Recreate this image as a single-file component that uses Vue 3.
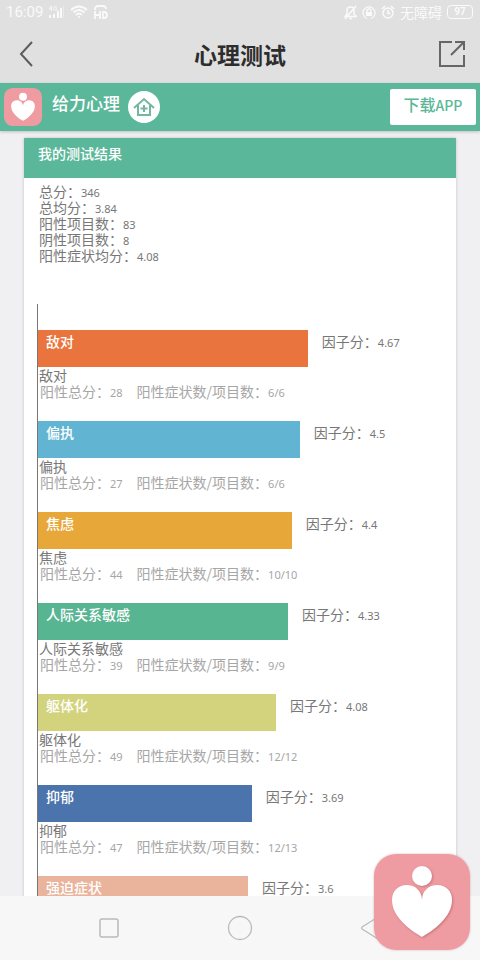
<script setup>
const summary = [
  { label: '总分', value: '346' },
  { label: '总均分', value: '3.84' },
  { label: '阳性项目数', value: '83' },
  { label: '阴性项目数', value: '8' },
  { label: '阳性症状均分', value: '4.08' }
]

const factors = [
  { name: '敌对', score: '4.67', total: '28', ratio: '6/6', width: 66.8, color: 'orange' },
  { name: '偏执', score: '4.5', total: '27', ratio: '6/6', width: 64.8, color: 'sky' },
  { name: '焦虑', score: '4.4', total: '44', ratio: '10/10', width: 62.8, color: 'amber' },
  { name: '人际关系敏感', score: '4.33', total: '39', ratio: '9/9', width: 61.9, color: 'green' },
  { name: '躯体化', score: '4.08', total: '49', ratio: '12/12', width: 58.9, color: 'lime' },
  { name: '抑郁', score: '3.69', total: '47', ratio: '12/13', width: 52.9, color: 'blue' },
  { name: '强迫症状', score: '3.6', width: 52, color: 'peach' }
]
</script>

<template>
  <div class="screen">
    <div class="status">
      <div class="status-group">
        <span class="clock">16:09</span>
        <svg width="17" height="14" viewBox="0 0 17 14" fill="currentColor">
          <path d="M1 10h2v3H1zM5 9h2v4H5zM9 6h2v7H9zM12 3h2v10h-2z" />
          <path d="M15 1h1v12h-1z" opacity=".4" />
          <path d="M3 1L1 4h3M3.500 1v5M9 2H6v3h3V4H8" fill="none" stroke="currentColor" stroke-width=".8" />
        </svg>
        <svg width="18" height="14" viewBox="0 0 18 14" fill="none" stroke="currentColor" stroke-width="1.800">
          <path d="M1 5q8-7 16 0M3.500 7.500q5.500-5 11 0M6 10q3-3 6 0" />
          <circle cx="9" cy="12" r="1" fill="currentColor" stroke="none" />
        </svg>
        <svg width="16" height="15" viewBox="0 0 16 15" fill="none" stroke="currentColor" stroke-width="1.800">
          <path d="M2 5q0-4 3-4h5q3 0 3 3M2 6v8M7 6v8M2 10h5M10 7v6h1q3 0 3-3t-3-3z" />
        </svg>
      </div>
      <div class="status-group">
        <svg width="13" height="15" viewBox="0 0 13 15" fill="none" stroke="currentColor" stroke-width="1.500">
          <path d="M1 11.500h11l-2-2.500V5q0-3-3.500-3T3 5v4zM5 13.500h3M1 14L12 1" />
        </svg>
        <svg width="14" height="15" viewBox="0 0 14 15" fill="none" stroke="currentColor" stroke-width="1.300">
          <path d="M5 13.500A6 6 0 1 1 9 13.500M5 7V6q0-2 2-2t2 2v1" />
          <path d="M4 7h6v4H4z" fill="currentColor" stroke="none" />
        </svg>
        <svg width="14" height="15" viewBox="0 0 14 15" fill="none" stroke="currentColor" stroke-width="1.500">
          <circle cx="7" cy="8" r="5" />
          <path d="M7 5v3.500h2.500M1 4l3-3M13 4l-3-3" />
        </svg>
        <span class="mode">无障碍</span>
        <span class="battery">97</span>
      </div>
    </div>

    <header class="titlebar">
      <button class="icon-button" type="button" aria-label="返回">
        <svg width="28" height="28" viewBox="0 0 28 28" fill="none" stroke="#5c5c5c" stroke-width="2">
          <path d="M18 2L7 14l11 12" />
        </svg>
      </button>
      <h1>心理测试</h1>
      <button class="icon-button" type="button" aria-label="分享">
        <svg width="28" height="28" viewBox="0 0 28 28" fill="none" stroke="#666" stroke-width="2">
          <path d="M14 2H2v24h24V15M13 15L25 3M17 2h9v8" />
        </svg>
      </button>
    </header>

    <div class="brand">
      <svg class="logo" viewBox="0 0 96 96">
        <rect width="96" height="96" rx="22" />
        <circle cx="48" cy="22" r="10" fill="#fff" />
        <path d="M48 46C48 37 41 31 33 31C23 31 18 38 18 46C18 63 36 76 48 83C60 76 78 63 78 46C78 38 73 31 63 31C55 31 48 37 48 46z" fill="#fff" />
      </svg>
      <span class="brand-name">给力心理</span>
      <a class="home" href="#" aria-label="首页">
        <svg width="22" height="20" viewBox="0 0 22 20" fill="none" stroke="currentColor" stroke-width="2">
          <path d="M1 11L11 2l10 9M5 8v10h12V8M11 8v7M7.500 11.500h7" />
        </svg>
      </a>
      <a class="download" href="#">下载<span class="latin">APP</span></a>
    </div>

    <main class="content">
      <section class="card">
        <h2>我的测试结果</h2>
        <div class="summary">
          <p v-for="item in summary" :key="item.label">{{ item.label }}：<span class="number">{{ item.value }}</span></p>
        </div>
        <div class="chart">
          <div v-for="factor in factors" :key="factor.name" class="factor">
            <div class="bar-row">
              <div class="bar" :class="factor.color" :style="{ width: factor.width + '%' }">{{ factor.name }}</div>
              <div class="score">因子分：<span class="number">{{ factor.score }}</span></div>
            </div>
            <template v-if="factor.total">
              <p class="name">{{ factor.name }}</p>
              <p class="detail">
                <span>阳性总分：<span class="number">{{ factor.total }}</span></span>
                <span>阳性症状数/项目数：<span class="number">{{ factor.ratio }}</span></span>
              </p>
            </template>
          </div>
        </div>
      </section>
    </main>

    <nav class="navbar">
      <button class="icon-button" type="button" aria-label="最近任务">
        <svg width="26" height="26" viewBox="0 0 26 26" fill="none" stroke="#bbb" stroke-width="1.500">
          <rect x="4" y="4" width="18" height="18" rx="2" />
        </svg>
      </button>
      <button class="icon-button" type="button" aria-label="主页">
        <svg width="26" height="26" viewBox="0 0 26 26" fill="none" stroke="#bbb" stroke-width="1.300">
          <circle cx="13" cy="13" r="11.500" />
        </svg>
      </button>
      <button class="icon-button" type="button" aria-label="后退">
        <svg width="26" height="26" viewBox="0 0 26 26" fill="none" stroke="#bbb" stroke-width="1.300" stroke-linejoin="round">
          <path d="M20 2L4 12q-1 1 0 2l16 10z" />
        </svg>
      </button>
    </nav>

    <button class="floating" type="button" aria-label="给力心理">
      <svg class="logo" viewBox="0 0 96 96">
        <rect width="96" height="96" rx="22" />
        <g class="mark">
          <circle cx="48" cy="22" r="10" />
          <path d="M48 46C48 37 41 31 33 31C23 31 18 38 18 46C18 63 36 76 48 83C60 76 78 63 78 46C78 38 73 31 63 31C55 31 48 37 48 46z" />
        </g>
      </svg>
    </button>
  </div>
</template>

<style>
body {
  margin: 0;
}
</style>

<style scoped>
.screen {
  display: flex;
  flex-direction: column;
  height: 100vh;
  overflow: hidden;
  background: #f0f0f2;
  color: #777;
  font-family: "Noto Sans CJK SC", sans-serif;
  font-size: 14px;
  line-height: 16px;
}

h1,
h2,
p {
  margin: 0;
}

svg {
  display: block;
  flex: none;
}

.icon-button {
  display: flex;
  padding: 0;
  border: 0;
  background: none;
}

.status {
  display: flex;
  flex: none;
  align-items: center;
  justify-content: space-between;
  height: 24px;
  padding: 0 7px 0 6px;
  background: #e0e0e0;
  color: #fafafa;
}

.status-group {
  display: flex;
  align-items: center;
  gap: 5px;
}

.clock {
  font-family: Roboto, sans-serif;
  font-size: 15px;
}

.battery {
  width: 24px;
  border: 1px solid #fafafa;
  border-radius: 4px;
  font-family: Roboto, sans-serif;
  font-size: 10px;
  font-weight: 700;
  line-height: 12px;
  text-align: center;
}

.titlebar {
  display: flex;
  flex: none;
  align-items: center;
  justify-content: space-between;
  height: 59px;
  padding: 0 14px;
  background: #e0e0e0;
}

h1 {
  color: #2d2d2d;
  font-size: 23px;
  font-weight: 700;
  line-height: 32px;
}

.brand {
  display: flex;
  flex: none;
  align-items: center;
  box-sizing: border-box;
  height: 48px;
  padding: 0 4px;
  background: #5bb799;
  box-shadow: 0 1px 3px #0003;
  color: #fff;
}

.logo {
  width: 100%;
  fill: #ee9ba1;
}

.brand .logo {
  width: 38px;
}

.brand-name {
  margin-left: 10px;
  padding-bottom: 8px;
  font-size: 17px;
  font-weight: 500;
  line-height: 24px;
}

.home {
  display: flex;
  align-items: center;
  justify-content: center;
  width: 32px;
  height: 32px;
  margin-left: 8px;
  border-radius: 50%;
  background: #fff;
  color: #74b79f;
}

.download {
  width: 86px;
  margin-left: auto;
  padding-bottom: 4px;
  border-radius: 2px;
  background: #fff;
  color: #5bb799;
  font-size: 16px;
  font-weight: 500;
  line-height: 31px;
  text-align: center;
  text-decoration: none;
}

.latin {
  font-size: 14px;
}

.content {
  flex: 1;
  min-height: 0;
  padding: 7px 24px 0;
  overflow: hidden;
}

.card {
  background: #fff;
  box-shadow: 0 0 3px #0003;
}

h2 {
  padding: 7px 14px 17px;
  background: #5bb799;
  color: #fff;
  font-size: 14px;
  font-weight: 500;
  line-height: 16px;
}

.summary {
  padding: 5px 15px 41px;
}

.number {
  font-family: "Noto Sans", sans-serif;
  font-size: 11px;
  line-height: 11px;
}

.chart {
  margin: 0 14px 0 13px;
  padding-top: 26px;
  border-left: 1px solid #777;
}

.factor {
  padding-bottom: 22px;
}

.bar-row {
  display: flex;
  gap: 14px;
}

.bar {
  box-sizing: border-box;
  height: 37px;
  padding: 3px 8px;
  color: #fff;
  font-weight: 500;
}

.score {
  padding-top: 3px;
}

.orange {
  background: #e9743e;
}

.sky {
  background: #62b5d2;
}

.amber {
  background: #e8a839;
}

.green {
  background: #58b592;
}

.lime {
  background: #d3d37d;
}

.blue {
  background: #4a74ab;
}

.peach {
  background: #eab39c;
}

.name {
  padding-left: 1px;
}

.detail {
  display: flex;
  gap: 14px;
  padding-left: 2px;
  color: #a6a6a6;
}

.navbar {
  display: flex;
  flex: none;
  align-items: center;
  justify-content: space-between;
  height: 64px;
  padding: 0 96px;
  background: #f7f7f7;
}

.floating {
  position: fixed;
  right: 10px;
  bottom: 10px;
  width: 96px;
  padding: 0;
  border: 0;
  border-radius: 22px;
  background: none;
  box-shadow: 0 0 2px #a0606880;
}

.mark {
  fill: #fff;
  filter: drop-shadow(1px 1px 1px #a0505880);
}
</style>
